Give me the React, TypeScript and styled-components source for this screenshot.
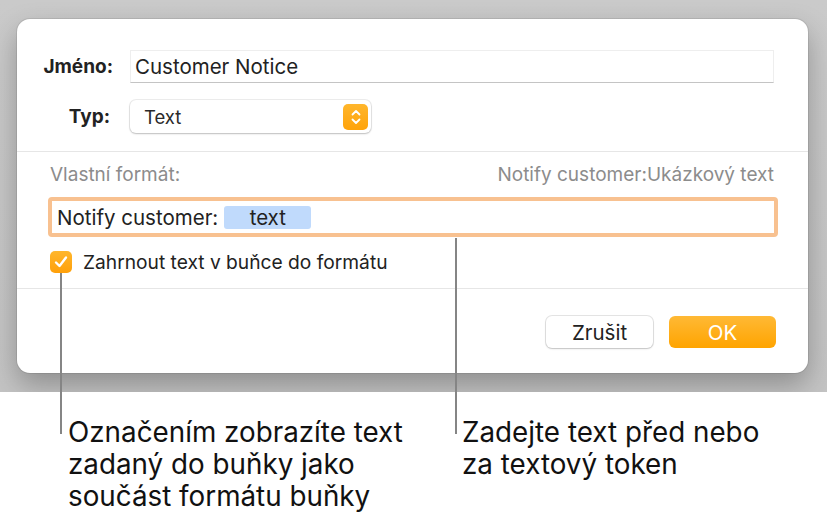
import React from 'react'
import styled, { createGlobalStyle } from 'styled-components'

const GlobalStyle = createGlobalStyle`
  html, body {
    margin: 0;
    padding: 0;
    background: #ffffff;
  }
  body {
    font-family: Inter, "Liberation Sans", Arial, sans-serif;
    -webkit-font-smoothing: antialiased;
  }
`

const Page = styled.div`
  position: relative;
  width: 827px;
  height: 527px;
  overflow: hidden;
`

const Stage = styled.div`
  height: 392px;
  box-sizing: border-box;
  padding: 19px 19px 0 17px;
  background: linear-gradient(180deg, #cacaca 0%, #c4c4c4 100%);
  overflow: hidden;
`

const Dialog = styled.div`
  width: 791px;
  height: 354px;
  background: #ffffff;
  border-radius: 13px;
  box-shadow: 0 0 0 1px rgba(0, 0, 0, 0.08), 0 12px 28px rgba(0, 0, 0, 0.28);
  display: flex;
  flex-direction: column;
`

const TopSection = styled.div`
  display: grid;
  grid-template-columns: 96px 1fr;
  column-gap: 17px;
  row-gap: 17px;
  padding: 31px 34px 18px 0;
  align-items: center;
`

const Label = styled.div<{ $shift?: number }>`
  text-align: right;
  font-weight: 700;
  font-size: 19px;
  color: #222222;
  padding-right: ${(p) => p.$shift ?? 0}px;
`

const TextField = styled.div`
  height: 33px;
  box-sizing: border-box;
  border: 1px solid #eeeeee;
  border-bottom: 1px solid #c4c4c4;
  display: flex;
  align-items: center;
  padding-left: 4px;
  font-size: 20.5px;
  color: #222222;
`

const Popup = styled.div`
  width: 241px;
  height: 33px;
  box-sizing: border-box;
  border-radius: 6px;
  background: #ffffff;
  box-shadow: 0 0 0 1px rgba(0, 0, 0, 0.07), 0 1px 2px rgba(0, 0, 0, 0.2);
  display: flex;
  align-items: center;
  justify-content: space-between;
  padding: 0 3px 0 14px;
  font-size: 18.5px;
  color: #2a2a2a;
`

const Stepper = styled.div`
  width: 25px;
  height: 26px;
  border-radius: 5px;
  background: linear-gradient(180deg, #ffb62c 0%, #ffa30a 100%);
  display: flex;
  align-items: center;
  justify-content: center;
`

const Divider = styled.div`
  height: 1px;
  background: #e6e6e6;
`

const FormatSection = styled.div`
  padding: 14px 30px 15px 31px;
  display: flex;
  flex-direction: column;
`

const FormatHeader = styled.div`
  display: flex;
  justify-content: space-between;
  padding: 0 4px 0 2px;
  font-size: 19px;
  color: #8c8c8c;
  height: 18px;
  line-height: 18px;
  margin-bottom: 13px;
`

const TokenField = styled.div`
  height: 40px;
  box-sizing: border-box;
  border: 4px solid #f8c190;
  border-radius: 4px;
  display: flex;
  align-items: center;
  padding-left: 5px;
  gap: 6px;
  font-size: 20.5px;
  color: #222222;
`

const Token = styled.span`
  width: 87px;
  height: 23px;
  border-radius: 3px;
  background: #c0dafc;
  display: flex;
  align-items: center;
  justify-content: center;
  font-size: 20.5px;
  color: #222222;
`

const CheckRow = styled.label`
  display: flex;
  align-items: center;
  gap: 11px;
  height: 22px;
  line-height: 22px;
  margin-top: 14px;
  padding-left: 2px;
  font-size: 19.2px;
  color: #222222;
`

const CheckBox = styled.span`
  width: 22px;
  height: 22px;
  border-radius: 5px;
  background: linear-gradient(180deg, #ffb62c 0%, #ffa00a 100%);
  display: flex;
  align-items: center;
  justify-content: center;
`

const ButtonRow = styled.div`
  display: flex;
  justify-content: flex-end;
  gap: 16px;
  padding: 27px 32px 0 0;
`

const Button = styled.div<{ $primary?: boolean }>`
  width: 107px;
  height: 32px;
  box-sizing: border-box;
  border-radius: 6px;
  display: flex;
  align-items: center;
  justify-content: center;
  font-size: 20.5px;
  color: ${(p) => (p.$primary ? '#ffffff' : '#222222')};
  background: ${(p) =>
    p.$primary ? 'linear-gradient(180deg, #ffb935 0%, #ffa400 100%)' : '#ffffff'};
  box-shadow: ${(p) =>
    p.$primary ? 'none' : '0 0 0 1px rgba(0, 0, 0, 0.1), 0 1px 2px rgba(0, 0, 0, 0.15)'};
`

const Callouts = styled.div`
  display: grid;
  grid-template-columns: 394px 1fr;
  padding: 24px 0 0 68px;
  font-size: 27.8px;
  line-height: 32px;
  color: #111111;
`

const CalloutText = styled.div``

const Leader = styled.div<{ $x: number; $top: number; $bottom: number }>`
  position: absolute;
  left: ${(p) => p.$x}px;
  top: ${(p) => p.$top}px;
  width: 2px;
  height: ${(p) => p.$bottom - p.$top}px;
  background: #858585;
`

const Chevrons = () => (
  <svg width="12" height="18" viewBox="0 0 12 18" fill="none">
    <path d="M2.5 6.5 L6 3 L9.5 6.5" stroke="#fff" strokeWidth="1.8" strokeLinecap="round" strokeLinejoin="round" />
    <path d="M2.5 11.5 L6 15 L9.5 11.5" stroke="#fff" strokeWidth="1.8" strokeLinecap="round" strokeLinejoin="round" />
  </svg>
)

const Check = () => (
  <svg width="16" height="16" viewBox="0 0 16 16" fill="none">
    <path d="M3 8.5 L6.5 12 L13 3.5" stroke="#fff" strokeWidth="2.4" strokeLinecap="round" strokeLinejoin="round" />
  </svg>
)

export default function App() {
  return (
    <Page>
      <GlobalStyle />
      <Stage>
        <Dialog>
          <TopSection>
            <Label>Jméno:</Label>
            <TextField>Customer Notice</TextField>
            <Label $shift={3}>Typ:</Label>
            <Popup>
              Text
              <Stepper>
                <Chevrons />
              </Stepper>
            </Popup>
          </TopSection>
          <Divider />
          <FormatSection>
            <FormatHeader>
              <span>Vlastní formát:</span>
              <span>Notify customer:Ukázkový text</span>
            </FormatHeader>
            <TokenField>
              Notify customer:
              <Token>text</Token>
            </TokenField>
            <CheckRow>
              <CheckBox>
                <Check />
              </CheckBox>
              Zahrnout text v buňce do formátu
            </CheckRow>
          </FormatSection>
          <Divider />
          <ButtonRow>
            <Button>Zrušit</Button>
            <Button $primary>OK</Button>
          </ButtonRow>
        </Dialog>
      </Stage>
      <Callouts>
        <CalloutText>
          Označením zobrazíte text
          <br />
          zadaný do buňky jako
          <br />
          součást formátu buňky
        </CalloutText>
        <CalloutText>
          Zadejte text před nebo
          <br />
          za textový token
        </CalloutText>
      </Callouts>
      <Leader $x={60} $top={273} $bottom={434} />
      <Leader $x={455} $top={238} $bottom={434} />
    </Page>
  )
}
